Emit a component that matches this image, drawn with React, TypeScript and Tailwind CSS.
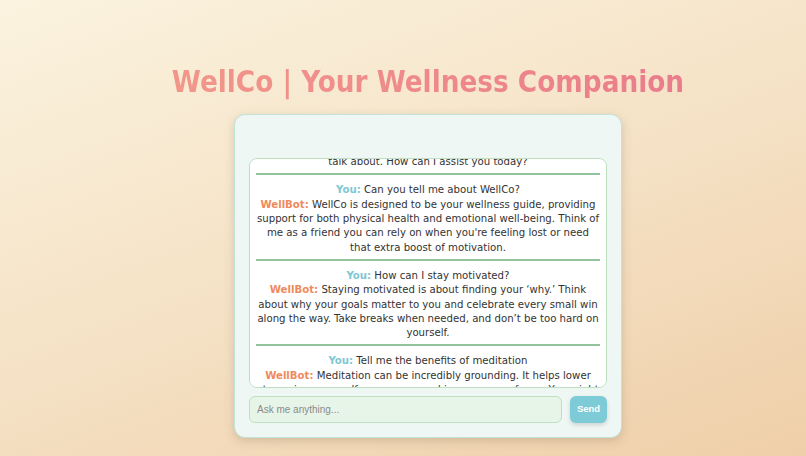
import { useLayoutEffect, useRef } from 'react'

const messages = [
  {
    you: 'Hi WellBot!',
    bot: (
      <>
        Hello! I'm WellBot, your friendly wellness companion. I'm here to help with fitness, nutrition, stress
        and anything else on your mind you'd like to
        <br />
        talk about. How can I assist you today?
      </>
    ),
  },
  {
    you: 'Can you tell me about WellCo?',
    bot: "WellCo is designed to be your wellness guide, providing support for both physical health and emotional well-being. Think of me as a friend you can rely on when you're feeling lost or need that extra boost of motivation.",
  },
  {
    you: 'How can I stay motivated?',
    bot: 'Staying motivated is about finding your ‘why.’ Think about why your goals matter to you and celebrate every small win along the way. Take breaks when needed, and don’t be too hard on yourself.',
  },
  {
    you: 'Tell me the benefits of meditation',
    bot: 'Meditation can be incredibly grounding. It helps lower stress, increase self-awareness, and improve your focus. You might want to start with just five minutes a day and build up from there.',
  },
]

export default function App() {
  const chatRef = useRef<HTMLDivElement>(null)
  const firstRef = useRef<HTMLDivElement>(null)

  useLayoutEffect(() => {
    // scroll so only the tail of the first reply shows
    if (chatRef.current && firstRef.current) {
      const el = firstRef.current
      chatRef.current.scrollTop = el.offsetTop + el.offsetHeight - 16
    }
  }, [])

  return (
    <div className="h-[456px] w-full overflow-hidden bg-[linear-gradient(160deg,#fbf3df_0%,#f5e2c6_50%,#efcfa9_100%)] font-['DejaVu_Sans_Condensed','DejaVu_Sans',sans-serif]">
      <div className="flex flex-col items-center pl-[50px] pt-[63px]">
        <h1 className="bg-gradient-to-r from-[#f2968a] to-[#ea7c8c] bg-clip-text text-[29.3px] font-bold leading-[38px] text-transparent">
          WellCo | Your Wellness Companion
        </h1>

        <div className="mt-[13px] flex h-[324px] w-[388px] flex-col rounded-[11px] border border-[#c3e2d8] bg-[#eff7f4] px-[14px] pb-[14px] pt-[43px] shadow-[0_3px_10px_rgba(120,100,70,0.25)]">
          <div
            ref={chatRef}
            className="relative h-[230px] overflow-y-auto rounded-[8px] border border-[#bfe0bf] bg-white px-[6px] text-center text-[11.3px] leading-[14.3px] text-[#333] [scrollbar-width:none]"
          >
            {messages.map((m, i) => (
              <div
                key={i}
                ref={i === 0 ? firstRef : undefined}
                className="border-b-2 border-[#93c39b] pb-[4px] pt-[8px] last:border-b-0"
              >
                <div>
                  <span className="font-bold text-[#7ec8d4]">You:</span> {m.you}
                </div>
                <div>
                  <span className="font-bold text-[#ef8a5c]">WellBot:</span> {m.bot}
                </div>
              </div>
            ))}
          </div>

          <div className="mt-[8px] flex gap-[8px]">
            <input
              placeholder="Ask me anything..."
              className="h-[27px] flex-1 rounded-[6px] border border-[#bfe0bf] bg-[#e6f5e8] px-[7px] font-['Liberation_Sans',sans-serif] text-[10px] text-[#444] outline-none placeholder:text-[#8a8a8a]"
            />
            <button className="h-[27px] w-[37px] rounded-[6px] bg-[#7ecbd8] font-['Liberation_Sans',sans-serif] text-[9.5px] font-bold text-white shadow-[0_2px_4px_rgba(0,0,0,0.15)]">
              Send
            </button>
          </div>
        </div>
      </div>
    </div>
  )
}
